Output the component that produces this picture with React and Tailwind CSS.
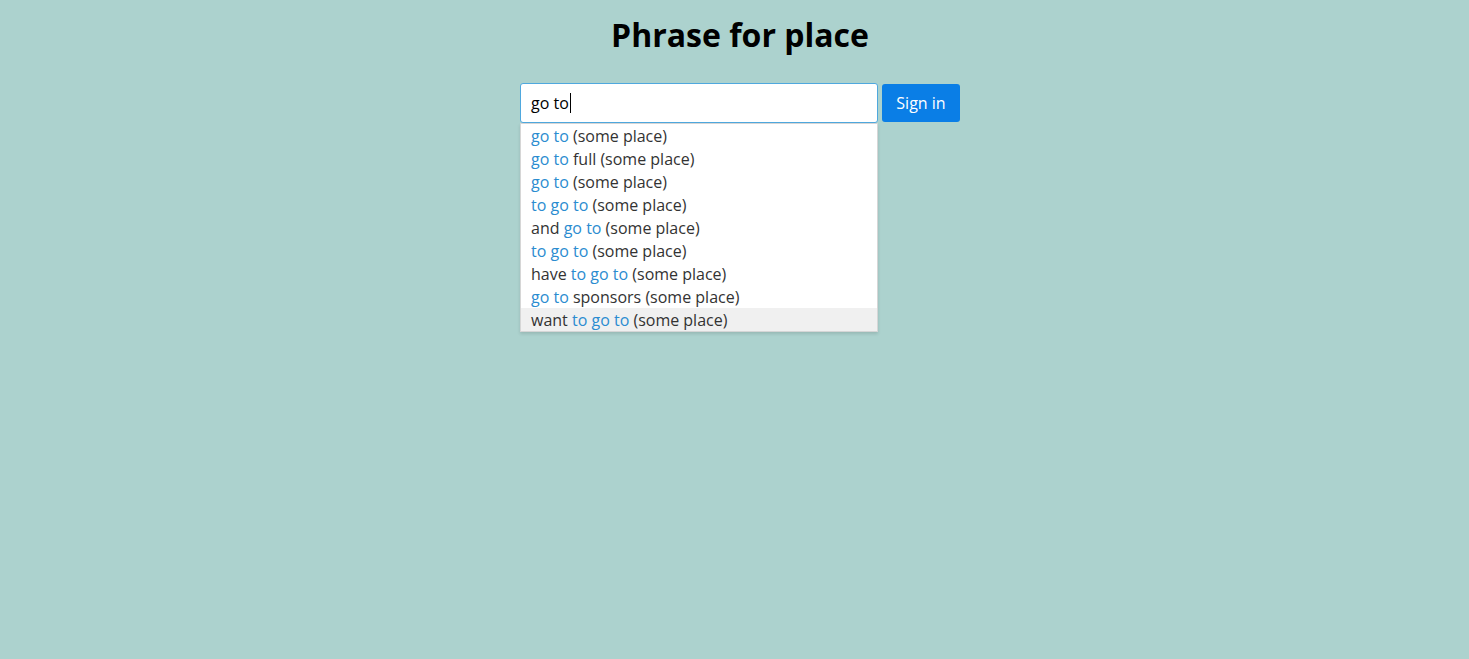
import React from "react";

const suggestions = [
  { pre: "", hit: "go to", post: " (some place)" },
  { pre: "", hit: "go to", post: " full (some place)" },
  { pre: "", hit: "go to", post: " (some place)" },
  { pre: "", hit: "to go to", post: " (some place)" },
  { pre: "and ", hit: "go to", post: " (some place)" },
  { pre: "", hit: "to go to", post: " (some place)" },
  { pre: "have ", hit: "to go to", post: " (some place)" },
  { pre: "", hit: "go to", post: " sponsors (some place)" },
  { pre: "want ", hit: "to go to", post: " (some place)" },
];

const App = () => {
  const active = 8;

  return (
    <div
      className="min-h-[659px] w-full bg-[#acd2ce] pl-[11px]"
      style={{ fontFamily: '"Open Sans", "Noto Sans", sans-serif' }}
    >
      <div className="flex flex-col items-center">
        <h1 className="mt-[13px] text-[32px] font-bold leading-[44px] text-black">
          Phrase for place
        </h1>

        <div className="mt-[26px] flex items-start gap-[4px]">
          <div className="relative w-[358px]">
            <div className="flex h-[40px] items-center rounded-[3px] border border-[#4fa8de] bg-white px-[10px] text-[16px] text-black">
              <span>go to</span>
              <span className="ml-[1px] h-[20px] w-[1px] bg-black" />
            </div>

            <ul className="absolute left-0 top-[40px] w-full border border-[#d6d6d6] bg-white shadow-[0_2px_3px_rgba(0,0,0,0.12)]">
              {suggestions.map((s, i) => (
                <li
                  key={i}
                  className={`h-[23px] px-[10px] pt-[1px] text-[16px] leading-[22px] text-[#333] ${
                    i === active ? "bg-[#f0f0f0]" : ""
                  }`}
                >
                  {s.pre}
                  <span className="text-[#2b8cd0]">{s.hit}</span>
                  {s.post}
                </li>
              ))}
            </ul>
          </div>

          <button className="mt-[1px] h-[38px] w-[78px] rounded-[3px] bg-[#0a7ee6] text-[16px] text-white">
            Sign in
          </button>
        </div>
      </div>
    </div>
  );
};

export default App;
